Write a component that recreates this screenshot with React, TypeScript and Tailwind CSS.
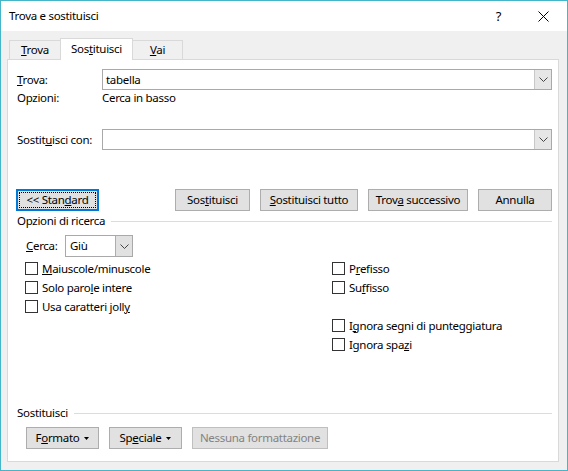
import type { ReactNode } from "react";

function Chevron() {
  return (
    <svg width="9" height="5" viewBox="0 0 9 5" className="text-[#444]">
      <path d="M0.5 0.5 L4.5 4.5 L8.5 0.5" fill="none" stroke="currentColor" strokeWidth="1" />
    </svg>
  );
}

function Caret() {
  return (
    <svg width="5" height="3" viewBox="0 0 5 3" className="ml-[5px]">
      <polygon points="0,0 5,0 2.5,3" fill="#000" />
    </svg>
  );
}

function Combo({ value }: { value?: string }) {
  return (
    <div className="flex-1 h-[21px] flex border border-[#a9a9a9] bg-white">
      <div className="flex-1 flex items-center pl-[3px]">{value}</div>
      <div className="w-[17px] h-full flex items-center justify-center bg-[#e6e6e6] border-l border-[#c8c8c8]">
        <Chevron />
      </div>
    </div>
  );
}

function Button({ w, children, disabled }: { w: string; children: ReactNode; disabled?: boolean }) {
  return (
    <div
      className={`${w} h-[22px] flex items-center justify-center bg-[#e1e1e1] border ${
        disabled ? "border-[#bfbfbf] text-[#838383]" : "border-[#adadad]"
      }`}
    >
      <span className="flex items-center whitespace-pre">{children}</span>
    </div>
  );
}

function Check({ children }: { children: ReactNode }) {
  return (
    <div className="h-[19px] flex items-center">
      <div className="w-[13px] h-[13px] border border-[#333] bg-white" />
      <span className="ml-[4px]">{children}</span>
    </div>
  );
}

function GroupLabel({ children }: { children: ReactNode }) {
  return (
    <div className="h-[16px] flex items-center">
      <span>{children}</span>
      <div className="flex-1 h-px bg-[#dcdcdc] ml-[6px]" />
    </div>
  );
}

export default function App() {
  return (
    <div className="w-[568px] h-[471px] flex flex-col border border-[#45b5c9] bg-[#f0f0f0] text-[11.5px] tracking-[-0.3px] text-black font-['Noto_Sans',sans-serif] leading-none">
      {/* Title bar */}
      <div className="h-[30px] bg-white flex items-center">
        <span className="ml-[8px] flex-1">Trova e sostituisci</span>
        <span className="mr-[37px] text-[13px]">?</span>
        <svg width="11" height="11" viewBox="0 0 11 11" className="mr-[18px]">
          <path d="M0.5 0.5 L10.5 10.5 M10.5 0.5 L0.5 10.5" stroke="#000" strokeWidth="1" />
        </svg>
      </div>

      <div className="flex-1 flex flex-col ml-[6px] mr-[8px] mb-[8px]">
        {/* Tabs */}
        <div className="mt-[7px] h-[21px] flex items-start pl-[2px]">
          <div className="w-[51px] h-[19px] mt-[2px] flex items-center justify-center border border-r-0 border-b-0 border-[#d9d9d9]">
            <span><u>T</u>rova</span>
          </div>
          <div className="relative z-10 w-[73px] h-[22px] flex items-center justify-center bg-white border border-b-0 border-[#d9d9d9] pb-[2px]">
            <span>Sos<u>t</u>ituisci</span>
          </div>
          <div className="w-[50px] h-[19px] mt-[2px] flex items-center justify-center border border-l-0 border-b-0 border-[#d9d9d9]">
            <span><u>V</u>ai</span>
          </div>
        </div>

        {/* Panel */}
        <div className="flex-1 flex flex-col bg-white border border-[#d9d9d9] pl-[9px] pr-[6px] pb-[12px]">
          <div className="mt-[9px] flex items-center">
            <span className="w-[85px]"><u>T</u>rova:</span>
            <Combo value="tabella" />
          </div>
          <div className="h-[16px] flex items-center">
            <span className="w-[85px]">Opzioni:</span>
            <span>Cerca in basso</span>
          </div>
          <div className="mt-[23px] flex items-center">
            <span className="w-[85px]">Sostit<u>u</u>isci con:</span>
            <Combo />
          </div>

          <div className="mt-[39px] flex items-center">
            <div className="ml-[-1px] w-[83px] h-[22px] p-[1px] bg-[#e1e1e1] border-2 border-[#0078d7]">
              <div className="w-full h-full flex items-center justify-center border border-dotted border-black">
                <span className="whitespace-pre">&lt;&lt; Stan<u>d</u>ard</span>
              </div>
            </div>
            <div className="flex-1 flex justify-end gap-[10px]">
              <Button w="w-[75px]">Sos<u>t</u>ituisci</Button>
              <Button w="w-[98px]"><u>S</u>ostituisci tutto</Button>
              <Button w="w-[100px]">Trov<u>a</u> successivo</Button>
              <Button w="w-[74px]">Annulla</Button>
            </div>
          </div>

          <div className="mt-[2px]">
            <GroupLabel>Opzioni di ricerca</GroupLabel>
          </div>

          <div className="mt-[6px] ml-[9px] flex items-center">
            <span className="w-[39px]"><u>C</u>erca:</span>
            <div className="w-[68px] h-[22px] flex border border-[#a9a9a9] bg-white">
              <div className="flex-1 flex items-center pl-[4px]">Giù</div>
              <div className="w-[17px] h-full flex items-center justify-center bg-[#e1e1e1] border-l border-[#adadad]">
                <Chevron />
              </div>
            </div>
          </div>

          <div className="mt-[2px] ml-[8px] grid grid-cols-[307px_1fr]">
            <div className="flex flex-col">
              <Check><u>M</u>aiuscole/minuscole</Check>
              <Check>Solo paro<u>l</u>e intere</Check>
              <Check>Usa caratteri joll<u>y</u></Check>
            </div>
            <div className="flex flex-col">
              <Check>P<u>r</u>efisso</Check>
              <Check>Su<u>f</u>fisso</Check>
              <div className="h-[19px]" />
              <Check>I<u>g</u>nora segni di punteggiatura</Check>
              <Check>Ignora spa<u>z</u>i</Check>
            </div>
          </div>

          <div className="mt-auto">
            <GroupLabel>Sostituisci</GroupLabel>
            <div className="mt-[6px] ml-[9px] flex gap-[10px]">
              <Button w="w-[73px]">F<u>o</u>rmato<Caret /></Button>
              <Button w="w-[73px]">Sp<u>e</u>ciale<Caret /></Button>
              <Button w="w-[136px]" disabled>Nessuna formattazione</Button>
            </div>
          </div>
        </div>
      </div>
    </div>
  );
}
